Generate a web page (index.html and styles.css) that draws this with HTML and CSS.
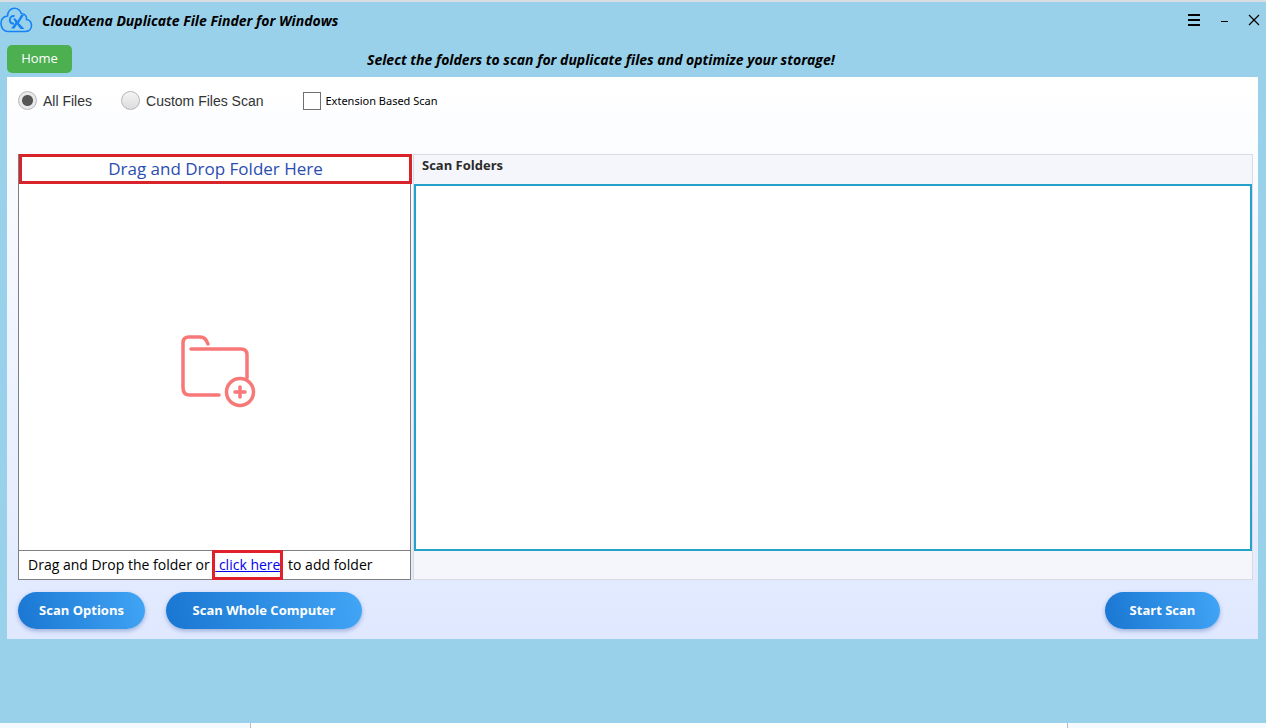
FILE: index.html
```html
<!DOCTYPE html>
<html lang="en">
<head>
    <meta charset="UTF-8">
    <meta name="viewport" content="width=device-width, initial-scale=1.0">
    <title>CloudXena Duplicate File Finder for Windows</title>
    <link rel="stylesheet" href="styles.css">
</head>
<body>
    <div class="app">
        <!-- Title bar -->
        <header class="title-bar">
            <svg class="logo" viewBox="0 0 33 26" aria-hidden="true">
                <path d="M8 24.500H25C29 24.500 31.500 22 31.500 18.500C31.500 15.500 29.500 13 26.500 12.500C27 9 24.500 6.500 21.500 6.800C20 3 17.500 1.200 14.500 1.200C10.500 1.200 7.500 4.500 7.500 9C3.500 9.500 1 12.500 1 16.500C1 21 4 24.500 8 24.500Z" fill="none" stroke="#1683f5" stroke-width="1.600"/>
                <path d="M14.500 9C11.500 8.500 9.800 10.500 9.800 13C9.800 15.500 11.500 17 14 16.500" fill="none" stroke="#1683f5" stroke-width="2"/>
                <path d="M13 11.500H15.500L17.500 14L21 8H24L18.800 16L24.500 22H20.500L17 17.500L14.500 21.500H11L15.500 15.500Z" fill="#1683f5"/>
            </svg>
            <h1 class="title">CloudXena Duplicate File Finder for Windows</h1>
            <div class="window-buttons">
                <button type="button" aria-label="Menu">
                    <svg width="12" height="12" viewBox="0 0 12 12"><path d="M0 1H12M0 6H12M0 11H12" stroke="#000" stroke-width="2"/></svg>
                </button>
                <button type="button" aria-label="Minimize">
                    <svg width="12" height="12" viewBox="0 0 12 12"><path d="M3 7.500H10" stroke="#000"/></svg>
                </button>
                <button type="button" aria-label="Close">
                    <svg width="12" height="12" viewBox="0 0 12 12"><path d="M1 1L11 11M11 1L1 11" stroke="#000" stroke-width="1.200"/></svg>
                </button>
            </div>
        </header>

        <!-- Home and headline -->
        <div class="nav">
            <button type="button" class="home-button">Home</button>
            <p class="headline">Select the folders to scan for duplicate files and optimize your storage!</p>
        </div>

        <main class="panel">
            <div class="options">
                <label class="option"><input type="radio" name="scan" class="radio" checked>All Files</label>
                <label class="option"><input type="radio" name="scan" class="radio">Custom Files Scan</label>
                <label class="option small"><input type="checkbox" class="checkbox">Extension Based Scan</label>
            </div>

            <div class="workspace">
                <section class="drop">
                    <h2 class="drop-title">Drag and Drop Folder Here</h2>
                    <div class="drop-area">
                        <svg width="76" height="74" viewBox="0 0 76 74" fill="none" stroke="#f87878" stroke-width="3.500" stroke-linecap="round" stroke-linejoin="round" aria-hidden="true">
                            <path d="M39 61H10Q3 61 3 54V9Q3 3 9 3H20Q24 3 26 6L28 10"/>
                            <path d="M11 15H61Q67 15 67 21V44"/>
                            <circle cx="60" cy="58" r="13.500"/>
                            <path d="M55 58H65M60 53V63"/>
                        </svg>
                    </div>
                    <p class="drop-footer">Drag and Drop the folder or <span class="mark"><a href="#">&nbsp;click here</a></span> to add folder</p>
                </section>

                <section class="folders">
                    <h2 class="folders-title">Scan Folders</h2>
                    <div class="folders-list"></div>
                    <div class="folders-footer"></div>
                </section>
            </div>

            <div class="actions">
                <button type="button" class="pill">Scan Options</button>
                <button type="button" class="pill wide">Scan Whole Computer</button>
                <button type="button" class="pill start">Start Scan</button>
            </div>
        </main>
    </div>

    <div class="behind">
        <div></div>
        <div></div>
        <div></div>
    </div>
</body>
</html>
```
FILE: styles.css
```css
* {
    box-sizing: border-box;
}
body {
    margin: 0;
    min-height: 100vh;
    display: flex;
    flex-direction: column;
    font-family: "Open Sans", "Noto Sans", sans-serif;
    color: #000;
}
h1, h2, p {
    margin: 0;
}
button {
    font-family: inherit;
    border: none;
    cursor: pointer;
}

/* Window */
.app {
    flex: 1;
    background: #9ad1ea;
    border-top: 2px solid #dadee2;
}
.title-bar {
    display: flex;
    align-items: center;
    height: 36px;
}
.logo {
    width: 33px;
    height: 26px;
    margin-right: 9px;
}
.title, .headline {
    font-size: 14px;
    font-weight: bold;
    font-style: italic;
}
.window-buttons {
    display: flex;
    gap: 6px;
    margin-left: auto;
}
.window-buttons button {
    display: flex;
    justify-content: center;
    align-items: center;
    width: 24px;
    height: 24px;
    padding: 0;
    background: none;
}

/* Navigation */
.nav {
    display: grid;
    grid-template-columns: 360px 1fr;
    align-items: center;
    padding: 7px 7px 4px;
}
.home-button {
    width: 65px;
    height: 28px;
    padding: 0 0 2px;
    border-radius: 5px;
    background: #4caf50;
    color: #fff;
    font-size: 13px;
}

/* Main panel */
.panel {
    margin: 0 8px 0 7px;
    padding: 0 5px 10px 11px;
    background: linear-gradient(#fff, #dfe8ff);
}
.options {
    display: flex;
    align-items: center;
    height: 77px;
    padding-bottom: 30px;
}
.option {
    display: flex;
    align-items: center;
    gap: 6px;
    margin-right: 29px;
    font-family: "Liberation Sans", Arial, sans-serif;
    font-size: 14px;
    color: #333;
}
.option:nth-child(2) {
    margin-right: 39px;
}
.option.small {
    gap: 5px;
    font-family: "Noto Sans", sans-serif;
    font-size: 11px;
    color: #000;
}
.radio, .checkbox {
    appearance: none;
    width: 19px;
    height: 19px;
    margin: 0;
    border: 1px solid #b5b5b5;
}
.radio {
    border-radius: 50%;
    background: linear-gradient(#f4f4f4, #dcdcdc);
}
.radio:checked {
    background: radial-gradient(circle, #555 5px, #e8e8e8 6px);
}
.checkbox {
    width: 18px;
    height: 18px;
    border-color: #707070;
    background: #fff;
}

/* Drop zone and folder list */
.workspace {
    display: flex;
    gap: 2px;
}
.drop {
    display: flex;
    flex-direction: column;
    flex: 0 0 393px;
    border: solid #808080;
    border-width: 0 1px;
    background: #fff;
}
.drop-title {
    height: 30px;
    margin-right: -2px;
    border: 3px solid #d8232a;
    font-size: 17px;
    font-weight: normal;
    line-height: 24px;
    text-align: center;
    color: #2a4db0;
}
.drop-area {
    flex: 1;
    display: flex;
    justify-content: center;
    align-items: center;
    padding: 7px 0 0 6px;
}
.drop-footer {
    height: 30px;
    padding-left: 9px;
    border: solid #808080;
    border-width: 1px 0;
    font-size: 14px;
    line-height: 28px;
    white-space: nowrap;
}
.mark {
    display: inline-block;
    padding: 0 2px;
    margin-right: 2px;
    outline: 3px solid #e0202a;
    outline-offset: -2px;
}
.mark a {
    color: #0000ee;
}
.folders {
    flex: 1;
    border: 1px solid #d9dbe3;
    background: #f5f6fb;
}
.folders-title {
    height: 29px;
    padding-left: 8px;
    font-size: 13px;
    line-height: 20px;
    color: #2b2b2b;
}
.folders-list {
    height: 367px;
    border: 2px solid #25a2cc;
    background: #fff;
}
.folders-footer {
    height: 28px;
}

/* Buttons */
.actions {
    display: flex;
    gap: 21px;
    padding: 12px 33px 0 0;
}
.pill {
    width: 127px;
    height: 37px;
    padding: 0 0 2px;
    border-radius: 19px;
    background: linear-gradient(75deg, #1976d2, #42a5f5);
    box-shadow: 0 2px 4px rgba(60, 90, 160, 0.4);
    color: #fff;
    font-size: 13px;
    font-weight: bold;
}
.pill.wide {
    width: 196px;
}
.pill.start {
    width: 115px;
    margin-left: auto;
}

/* Strip under the window */
.behind {
    display: grid;
    grid-template-columns: 251px 1fr 198px;
    height: 5px;
    background: #f5faff;
}
.behind div:nth-child(2) {
    background: #fff;
}
.behind div:not(:last-child) {
    border-right: 1px solid #bbb;
}
```
